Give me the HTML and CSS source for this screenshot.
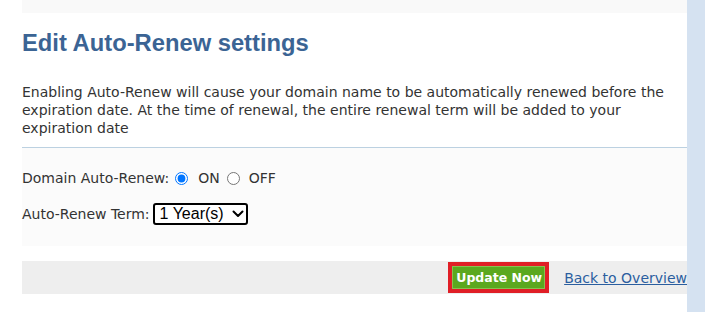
FILE: index.html
```html
<!DOCTYPE html>
<html lang="en">
<head>
<meta charset="utf-8">
<title>Edit Auto-Renew settings</title>
<link rel="stylesheet" href="styles.css">
</head>
<body>
<div class="page">
  <main class="main">
    <div class="topbar"></div>
    <h1 class="title">Edit Auto-Renew settings</h1>
    <p class="intro">Enabling Auto-Renew will cause your domain name to be automatically renewed before the expiration date. At the time of renewal, the entire renewal term will be added to your expiration date</p>
    <form class="form">
      <div class="row">
        <span class="label">Domain Auto-Renew:</span>
        <input class="radio" type="radio" name="ar" id="on" checked>
        <label class="opt" for="on">ON</label>
        <input class="radio radio-off" type="radio" name="ar" id="off">
        <label class="opt" for="off">OFF</label>
      </div>
      <div class="row row-term">
        <span class="label">Auto-Renew Term:</span>
        <span class="select-wrap">
          <select class="select">
            <option>1 Year(s)</option>
            <option>2 Year(s)</option>
            <option>3 Year(s)</option>
          </select>
          <svg class="chev" width="12" height="8" viewBox="0 0 12 8" aria-hidden="true"><path d="M1.5 1.5 L6 6 L10.5 1.5" fill="none" stroke="#000" stroke-width="2" stroke-linecap="round" stroke-linejoin="round"/></svg>
        </span>
      </div>
    </form>
    <div class="actions">
      <button class="btn" type="button">Update Now</button>
      <a class="back" href="#">Back to Overview</a>
    </div>
  </main>
  <aside class="side"></aside>
</div>
</body>
</html>
```
FILE: styles.css
```css
html, body {
  margin: 0;
  padding: 0;
  background: #fff;
}
.page {
  display: flex;
  height: 312px;
  overflow: hidden;
  font-family: "DejaVu Sans", Verdana, sans-serif;
  font-size: 14px;
  color: #333;
}
.main {
  flex: 1;
  padding-left: 22px;
  min-width: 0;
}
.side {
  width: 18px;
  background: #d5e2f1;
}
.topbar {
  height: 13px;
  background: #f9f9f9;
}
.title {
  margin: 16px 0 0;
  font-family: "Liberation Sans", Arial, sans-serif;
  font-weight: bold;
  font-size: 23.75px;
  line-height: 28px;
  color: #3b6494;
}
.intro {
  margin: 26px 0 0;
  line-height: 18px;
}
.form {
  margin-top: 10px;
  border-top: 1px solid #bcd1e1;
  background: #fbfbfb;
  padding: 20px 0 22px;
}
.row {
  display: flex;
  align-items: center;
  height: 20px;
}
.row-term {
  margin-top: 16px;
}
.radio {
  width: 13px;
  height: 13px;
  margin: 0 10px 0 6px;
  accent-color: #0075ff;
}
.radio-off {
  margin-left: 7px;
  margin-right: 9px;
}
.select-wrap {
  position: relative;
  display: inline-flex;
  margin-left: 3px;
}
.select {
  appearance: none;
  -webkit-appearance: none;
  font-family: "Liberation Sans", Arial, sans-serif;
  font-size: 16px;
  color: #000;
  background: #fff;
  border: 2px solid #000;
  border-radius: 3px;
  height: 22px;
  width: 95px;
  padding: 0 0 0 5px;
  line-height: 18px;
}
.chev {
  position: absolute;
  right: 4px;
  top: 7px;
  pointer-events: none;
}
.actions {
  margin-top: 15px;
  height: 33px;
  background: #eeeeee;
  display: flex;
  justify-content: flex-end;
  align-items: center;
}
.btn {
  height: 31px;
  box-sizing: border-box;
  border: 4px solid #e01e26;
  background: #5ba81f;
  box-shadow: inset 0 0 0 1px #86c24f;
  color: #fff;
  font-family: "DejaVu Sans", Verdana, sans-serif;
  font-weight: bold;
  font-size: 12.5px;
  padding: 0 3px 0 4px;
  margin: 0 15px 0 0;
  cursor: pointer;
}
.back {
  color: #2b5e9f;
  text-decoration: underline;
  font-size: 14px;
  white-space: nowrap;
}
```
